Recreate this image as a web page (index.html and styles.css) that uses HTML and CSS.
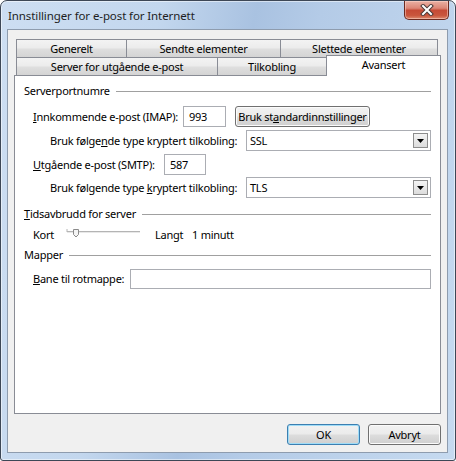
FILE: index.html
```html
<!DOCTYPE html>
<html lang="no">
<head>
  <meta charset="UTF-8" />
  <title>Innstillinger for e-post for Internett</title>
  <link rel="stylesheet" href="styles.css">
</head>
<body>

  <div class="window">
    <div class="titlebar">
      <span class="title">Innstillinger for e-post for Internett</span>
      <div class="close-btn">
        <svg width="14" height="12" viewBox="0 0 14 12">
          <path d="M3 2 L11 10 M11 2 L3 10" stroke="#4a3a38" stroke-width="4" stroke-linecap="square" fill="none"/>
          <path d="M3 2 L11 10 M11 2 L3 10" stroke="#ffffff" stroke-width="2" stroke-linecap="square" fill="none"/>
        </svg>
      </div>
    </div>

    <div class="client">
      <div class="tabs">
        <div class="tab-row">
          <div class="tab w-gen">Generelt</div>
          <div class="tab w-sendt">Sendte elementer</div>
          <div class="tab w-slett">Slettede elementer</div>
        </div>
        <div class="tab-row">
          <div class="tab w-server">Server for utgående e-post</div>
          <div class="tab w-tilk">Tilkobling</div>
          <div class="tab w-avan active">Avansert</div>
        </div>

        <div class="panel">
          <!-- Serverportnumre -->
          <div class="group-head">Serverportnumre</div>

          <div class="row r-imap">
            <span class="lbl lbl-imap"><u>I</u>nnkommende e-post (IMAP):</span>
            <input class="field f-imap" type="text" value="993">
            <button class="btn btn-std" type="button">Bruk st<u>a</u>ndardinnstillinger</button>
          </div>

          <div class="row sub r-enc1">
            <span class="lbl lbl-enc">Bruk følge<u>n</u>de type kryptert tilkobling:</span>
            <div class="combo">
              <span>SSL</span>
              <div class="combo-arrow">
                <svg width="7" height="4" viewBox="0 0 7 4"><path d="M0 0 H7 L3.5 4 Z" fill="#000"/></svg>
              </div>
            </div>
          </div>

          <div class="row r-smtp">
            <span class="lbl lbl-smtp"><u>U</u>tgående e-post (SMTP):</span>
            <input class="field f-smtp" type="text" value="587">
          </div>

          <div class="row sub r-enc2">
            <span class="lbl lbl-enc">Bruk følgende type <u>k</u>ryptert tilkobling:</span>
            <div class="combo">
              <span>TLS</span>
              <div class="combo-arrow">
                <svg width="7" height="4" viewBox="0 0 7 4"><path d="M0 0 H7 L3.5 4 Z" fill="#000"/></svg>
              </div>
            </div>
          </div>

          <!-- Tidsavbrudd -->
          <div class="group-head g-time"><span><u>T</u>idsavbrudd for server</span></div>

          <div class="row r-time">
            <span class="lbl lbl-kort">Kort</span>
            <svg class="slider" width="75" height="17" viewBox="0 0 75 17">
              <path d="M1 5.5 H74" stroke="#b4b4b4" stroke-width="1"/>
              <path d="M1 6.5 H74" stroke="#e8e8e8" stroke-width="1"/>
              <path d="M1 3 V6" stroke="#b4b4b4" stroke-width="1"/>
              <path d="M7.5 3.5 H12.5 V8.5 L10 11 L7.5 8.5 Z" fill="#f4f4f4" stroke="#8a8a8a" stroke-width="1"/>
            </svg>
            <span class="lbl lbl-langt">Langt</span>
            <span>1 minutt</span>
          </div>

          <!-- Mapper -->
          <div class="group-head g-folder">Mapper</div>

          <div class="row r-folder">
            <span class="lbl lbl-bane"><u>B</u>ane til rotmappe:</span>
            <input class="field f-bane" type="text" value="">
          </div>
        </div>
      </div>

      <div class="actions">
        <button class="btn default" type="button">OK</button>
        <button class="btn" type="button">Avbryt</button>
      </div>
    </div>
  </div>

</body>
</html>
```

FILE: styles.css
```css
body {
  margin: 0;
  padding: 0;
  font-family: 'Noto Sans', sans-serif;
  font-size: 11px;
  letter-spacing: -0.25px;
  color: #000;
}

.window {
  width: 456px;
  height: 461px;
  box-sizing: border-box;
  border: 1px solid #3d4756;
  border-radius: 7px 7px 3px 3px;
  padding: 0 7px 7px 6px;
  display: flex;
  flex-direction: column;
  background: linear-gradient(100deg, #cddef2 0%, #c3d7ee 30%, #a9c2e1 48%, #b4cbe7 60%, #c6daf0 100%);
  box-shadow: inset 0 0 0 1px rgba(255, 255, 255, 0.5);
  white-space: nowrap;
}

.titlebar {
  height: 28px;
  padding-left: 1px;
  display: flex;
  justify-content: space-between;
  align-items: flex-start;
}

.title {
  margin-top: 7px;
  line-height: 15px;
  font-size: 11.5px;
  letter-spacing: -0.1px;
  color: #1e1e1e;
}

.close-btn {
  width: 45px;
  height: 19px;
  box-sizing: border-box;
  margin-right: -1px;
  border: 1px solid #6b2a20;
  border-top: none;
  border-radius: 0 0 5px 5px;
  background: linear-gradient(#eab1a4 0%, #dc8676 40%, #c54a35 52%, #c9563d 80%, #dc8a6e 100%);
  box-shadow: inset 0 0 0 1px rgba(255, 220, 210, 0.5);
  display: flex;
  align-items: center;
  justify-content: center;
}

.client {
  flex: 1;
  border: 1px solid #8e9cae;
  background: #f0f0f0;
  padding: 9px 6px 0 6px;
  display: flex;
  flex-direction: column;
}

/* Tabs */
.tab-row {
  display: flex;
  height: 18px;
  padding-left: 2px;
}

.tab {
  box-sizing: border-box;
  height: 18px;
  margin-left: -1px;
  border: 1px solid #898c95;
  border-bottom: none;
  background: linear-gradient(#f3f3f3 0%, #ececec 45%, #dedede 55%, #d4d4d4 100%);
  display: flex;
  align-items: center;
  justify-content: center;
  line-height: 15px;
}

.tab:first-child {
  margin-left: 0;
}

.w-gen { width: 111px; }
.w-sendt { width: 155px; }
.w-slett { width: 158px; }
.w-server { width: 202px; }
.w-tilk { width: 110px; }
.w-avan { width: 115px; }

.tab.active {
  position: relative;
  z-index: 1;
  height: 21px;
  margin-top: -2px;
  background: #fff;
  align-items: flex-start;
  padding-top: 1px;
}

.panel {
  box-sizing: border-box;
  height: 339px;
  border: 1px solid #898c95;
  background: #fff;
  padding: 7px 9px 0 9px;
}

.group-head {
  display: flex;
  align-items: center;
  height: 15px;
  line-height: 15px;
}

.group-head::after {
  content: "";
  flex: 1;
  margin-left: 6px;
  margin-top: 1px;
  border-top: 1px solid #a0a0a0;
}

.row {
  display: flex;
  align-items: center;
  height: 21px;
  padding-left: 9px;
  line-height: 15px;
}

.row.sub {
  padding-left: 26px;
}

.r-imap { margin-top: 8px; }
.r-enc1 { margin-top: 3px; }
.r-smtp { margin-top: 3px; }
.r-enc2 { margin-top: 2px; }
.g-time { margin-top: 8px; }
.r-time { margin-top: 5px; height: 17px; }
.g-folder { margin-top: 4px; }
.r-folder { margin-top: 6px; }

.lbl { flex: none; }
.lbl-imap { width: 150px; }
.lbl-enc { width: 196px; }
.lbl-smtp { width: 131px; }
.lbl-bane { width: 97px; }
.lbl-kort { width: 33px; }
.lbl-langt { width: 37px; margin-left: 14px; }

.field {
  box-sizing: border-box;
  height: 21px;
  margin: 0;
  padding: 0 5px;
  border: 1px solid #abadb3;
  background: #fff;
  font: inherit;
  letter-spacing: inherit;
  color: #000;
  outline: none;
}

.f-imap { width: 43px; }
.f-smtp { width: 42px; }
.f-bane { width: 302px; height: 20px; }

.combo {
  box-sizing: border-box;
  width: 186px;
  height: 21px;
  border: 1px solid #abadb3;
  background: #fff;
  padding: 0 2px 0 3px;
  display: flex;
  align-items: center;
  justify-content: space-between;
}

.combo-arrow {
  box-sizing: border-box;
  width: 15px;
  height: 15px;
  border: 1px solid #8d8d8d;
  background: linear-gradient(#f4f4f4, #dcdcdc);
  display: flex;
  align-items: center;
  justify-content: center;
}

.slider {
  flex: none;
  display: block;
}

/* Buttons */
.btn {
  box-sizing: border-box;
  height: 21px;
  width: 73px;
  margin: 0;
  padding: 0;
  border: 1px solid #707070;
  border-radius: 3px;
  background: linear-gradient(#f2f2f2 0%, #ebebeb 48%, #dddddd 52%, #cfcfcf 100%);
  box-shadow: inset 0 0 0 1px #fbfbfb;
  font: inherit;
  letter-spacing: inherit;
  color: #000;
  line-height: 15px;
  white-space: nowrap;
}

.btn-std {
  width: 135px;
  margin-left: 9px;
}

.btn.default {
  border-color: #3c7fb1;
  box-shadow: inset 0 0 0 1px #9fdcf7;
}

.actions {
  display: flex;
  justify-content: flex-end;
  gap: 8px;
  margin-top: 10px;
}
```
